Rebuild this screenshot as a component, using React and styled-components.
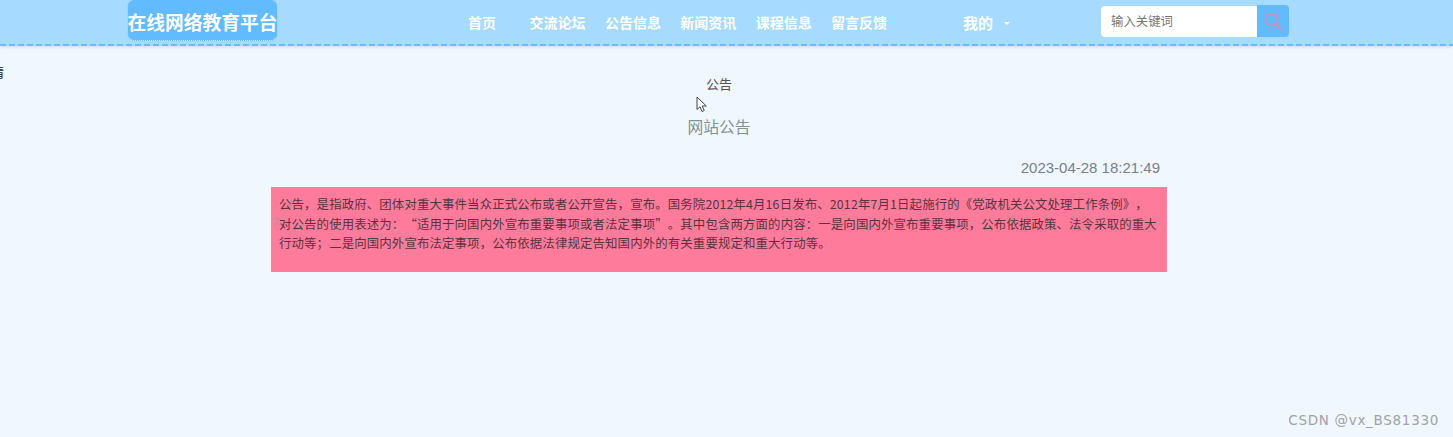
import React from 'react'
import styled, { createGlobalStyle } from 'styled-components'

const GlobalStyle = createGlobalStyle`
  html, body {
    margin: 0;
    padding: 0;
    background: #f0f7ff;
    overflow: hidden;
  }
  body {
    font-family: "Noto Sans CJK SC", "Liberation Sans", sans-serif;
  }
`
const Page = styled.div`
  position: relative;
  width: 1453px;
  height: 437px;
  overflow: hidden;
`
const Header = styled.header`
  display: flex;
  align-items: flex-start;
  height: 46px;
  padding-left: 127px;
  background:
    repeating-linear-gradient(90deg, #66bff5 0 6px, transparent 6px 9px) bottom / 100% 2px no-repeat,
    #a6dbff;
  box-shadow: 0 1px 3px rgba(120, 150, 220, 0.3);
`
const Logo = styled.div`
  display: flex;
  justify-content: center;
  width: 151px;
  height: 42px;
  margin-top: -1px;
  box-sizing: border-box;
  border: 1px dotted #d5eeff;
  border-radius: 8px;
  background: #62baff;
  color: #fff;
  font-size: 18.8px;
  font-weight: 700;
  line-height: 43px;
  white-space: nowrap;
`
const Nav = styled.nav`
  display: flex;
  margin-left: 190px;
  width: 655px;
`
const NavItem = styled.a`
  margin-right: ${p => p.$gap}px;
  color: #fff;
  font-size: ${p => p.$size || 14}px;
  font-weight: 700;
  line-height: 45px;
  white-space: nowrap;
`
const Caret = styled.span`
  display: inline-block;
  margin: 0 0 2px 11px;
  border: 3px solid transparent;
  border-top-color: #fff;
  border-bottom: 0;
  vertical-align: middle;
`
const Search = styled.div`
  display: flex;
  align-items: flex-start;
  margin-top: 5px;
  margin-left: -22px;
`
const SearchInput = styled.div`
  width: 156px;
  height: 31px;
  margin-top: 1px;
  padding-left: 10px;
  box-sizing: border-box;
  border-radius: 4px 0 0 4px;
  background: #fff;
  color: #777;
  font-size: 12.4px;
  line-height: 31px;
`
const SearchButton = styled.div`
  display: flex;
  align-items: center;
  justify-content: center;
  width: 32px;
  height: 32px;
  border-radius: 0 4px 4px 0;
  background: #62baff;
  color: #e58ab4;
`
const EdgeText = styled.span`
  position: absolute;
  left: -9px;
  top: 62px;
  color: #222;
  font-size: 13px;
`
const Main = styled.main`
  display: flex;
  flex-direction: column;
  align-items: center;
  width: 1438px;
  padding-top: 28px;
`
const Crumb = styled.div`
  color: #555;
  font-size: 13px;
  line-height: 20px;
`
const Title = styled.h1`
  margin: 22px 0 0;
  color: #8a8f96;
  font-size: 15.8px;
  font-weight: 400;
  line-height: 22px;
`
const Time = styled.div`
  align-self: flex-start;
  width: 1160px;
  margin-top: 20px;
  color: #76818d;
  font-family: "Liberation Sans", sans-serif;
  font-size: 15px;
  line-height: 20px;
  text-align: right;
`
const Notice = styled.div`
  width: 896px;
  height: 85px;
  margin-top: 9px;
  padding: 8px 8px 0;
  box-sizing: border-box;
  background: #ff7b9c;
  color: #5b3340;
  font-size: 12.4px;
  letter-spacing: 0.15px;
  line-height: 19.5px;
  white-space: nowrap;
  text-spacing-trim: space-all;
`
const Quote = styled.span`
  font-feature-settings: "fwid";
`
const Pointer = styled.svg`
  position: absolute;
  left: 696px;
  top: 96px;
`
const Watermark = styled.div`
  position: absolute;
  right: 14px;
  top: 411px;
  color: #a0a3a6;
  font-family: "DejaVu Sans", sans-serif;
  font-size: 13.5px;
  letter-spacing: 0.7px;
  line-height: 18px;
`

const links = [
  ['首页', 33.5],
  ['交流论坛', 19.4],
  ['公告信息', 19.4],
  ['新闻资讯', 19.4],
  ['课程信息', 19.4],
  ['留言反馈', 75.9],
]

export default function App() {
  return (
    <Page>
      <GlobalStyle />
      <Header>
        <Logo>在线网络教育平台</Logo>
        <Nav>
          {links.map(([label, gap]) => (
            <NavItem key={label} $gap={gap}>{label}</NavItem>
          ))}
          <NavItem $gap={0} $size={15}>我的<Caret /></NavItem>
        </Nav>
        <Search>
          <SearchInput>输入关键词</SearchInput>
          <SearchButton>
            <svg width="20" height="20" viewBox="0 0 20 20" fill="none" stroke="currentColor" strokeWidth="1.5" strokeLinecap="round">
              <circle cx="8.5" cy="8.5" r="6" />
              <path d="M13 13l4.5 4.5" strokeWidth="2.2" />
            </svg>
          </SearchButton>
        </Search>
      </Header>
      <EdgeText>情</EdgeText>
      <Main lang="zh-CN">
        <Crumb>公告</Crumb>
        <Title>网站公告</Title>
        <Time>2023-04-28 18:21:49</Time>
        <Notice>
          公告，是指政府、团体对重大事件当众正式公布或者公开宣告，宣布。国务院2012年4月16日发布、2012年7月1日起施行的《党政机关公文处理工作条例》，<br />
          对公告的使用表述为：<Quote>“</Quote>适用于向国内外宣布重要事项或者法定事项<Quote>”</Quote>。其中包含两方面的内容：一是向国内外宣布重要事项，公布依据政策、法令采取的重大<br />
          行动等；二是向国内外宣布法定事项，公布依据法律规定告知国内外的有关重要规定和重大行动等。
        </Notice>
      </Main>
      <Pointer width="13" height="17" viewBox="0 0 13 17">
        <path d="M1 1v12.5l3-2.7 2 4.7 2.2-1-2-4.5h4.1z" fill="#fff" stroke="#444" strokeWidth="1" strokeLinejoin="round" />
      </Pointer>
      <Watermark>CSDN @vx_BS81330</Watermark>
    </Page>
  )
}
